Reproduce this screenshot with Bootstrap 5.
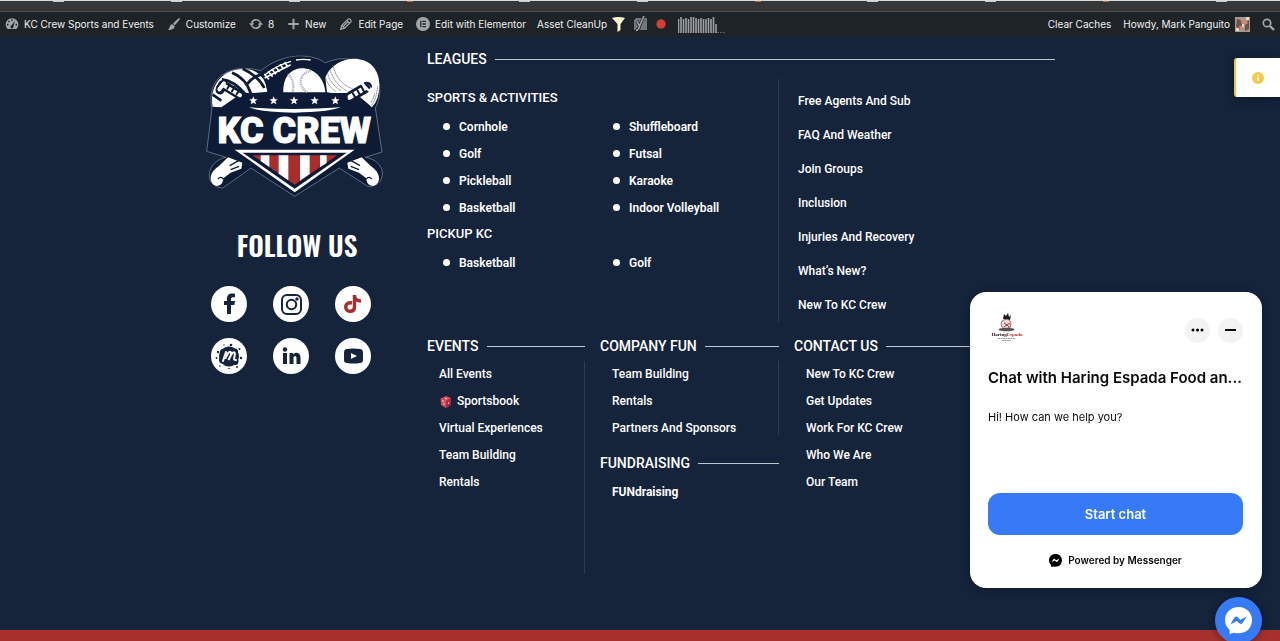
<!DOCTYPE html>
<html lang="en">
<head>
<meta charset="utf-8">
<meta name="viewport" content="width=device-width, initial-scale=1">
<title>KC Crew Sports and Events</title>
<link href="https://cdn.jsdelivr.net/npm/bootstrap@5.3.0/dist/css/bootstrap.min.css" rel="stylesheet">
<style>
  body { font-family: Roboto, sans-serif; background: #15233b; color: #fff; font-size: 12px; line-height: 20px; }
  a { color: inherit; text-decoration: none; }
  svg { display: block; flex: none; }
  .tab-strip { height: 12px; background: #353739; border-top: 1px solid #d5dcda; border-bottom: 1px solid #4b4e51; }
  .tab-strip i { width: 11px; height: 1px; background: #c9cccc; }
  .tab-strip i.warm { width: 6px; background: #b5643d; }
  .adminbar { height: 25px; background: #1e2327; color: #f0f0f1; font: 10px/24px Inter, sans-serif; padding: 0 5px 1px; }
  .adminbar svg { color: #a2a6aa; }
  .bar-items { gap: 13px; }
  .bar-items a { display: flex; align-items: center; gap: 5px; }
  .bar-right { gap: 12px; }
  .bar-extras { gap: 8px; margin-left: -2px; }
  .site { padding: 0 20px 0 0; }
  .wrap { max-width: 850px; margin: 0 auto; }
  .brand-col { width: 222px; padding-top: 16px; }
  .brand-inner { width: 178px; }
  .follow { font: 600 27px/40px Oswald, "Roboto Condensed", "Liberation Sans Narrow", sans-serif; margin: 26px 0 21px 6px; }
  .socials { display: grid; grid-template-columns: repeat(3, 36px); gap: 16px 26px; margin-left: 6px; }
  .socials a { width: 36px; height: 36px; border-radius: 50%; background: #fff; color: #15233b; }
  .head { display: flex; align-items: center; gap: 8px; font-size: 14px; font-weight: 500; line-height: 20px; margin: 0; white-space: nowrap; }
  .head::after { content: ""; flex: 1; height: 1px; background: #bcc8d0; }
  .leagues { margin-bottom: 10px; }
  .subhead { font-size: 13px; font-weight: 500; line-height: 24px; margin: 0; }
  .rule-end { border-right: 1px solid #2c3a52; }
  .sports-col { width: 352px; padding-top: 7px; }
  .sports { list-style: none; margin: 0; padding: 0 0 0 16px; display: grid; grid-template-columns: 170px 1fr; line-height: 27px; font-weight: 600; }
  .sports li { display: flex; align-items: center; gap: 9px; }
  .sports li::before { content: ""; width: 7px; height: 7px; margin-bottom: 3px; border-radius: 50%; background: #fff; }
  .help { line-height: 34px; font-weight: 500; font-size: 12px; padding: 5px 0 0 19px; }
  .events-grid { display: grid; grid-template-columns: 158px 179px 1fr; column-gap: 15px; margin-top: 14px; }
  .menu { line-height: 27px; font-weight: 500; font-size: 12px; padding: 0 0 0 12px; margin: 9px 0 0; }
  .events-menu { height: 213px; }
  .company-menu { height: 74px; }
  .menu ul { margin-top: -4px; }
  .fundraising { margin-top: 18px; }
  .fund-menu { margin-top: 10px; }
  .info-tab { right: 0; top: 58px; width: 46px; height: 39px; background: #fff; border: 0; border-left: 2px solid #efc443; border-radius: 3px 0 0 3px; box-shadow: 0 2px 12px #0005; }
  .chat { right: 18px; bottom: 53px; width: 292px; height: 296px; background: #fff; color: #080809; border-radius: 16px; padding: 20px 19px 20px 18px; font-family: Inter, sans-serif; box-shadow: 0 2px 10px #0004; }
  .chat-round { width: 25px; height: 25px; border: 0; border-radius: 50%; background: #f3f3f3; }
  .chat h2 { font-size: 15px; line-height: 20px; font-weight: 600; margin: 20px 0 0; white-space: nowrap; }
  .chat p { font-size: 11px; line-height: 20px; margin: 19px 0 0; }
  .start { background: #367bf5; color: #fff; border: 0; border-radius: 12px; height: 42px; font-size: 13px; font-weight: 600; }
  .powered { font-size: 10px; font-weight: 600; line-height: 16px; margin-top: 17px; gap: 6px; }
  .fab { right: 18px; bottom: -3px; width: 47px; height: 47px; border: 0; border-radius: 50%; background: #367bf5; box-shadow: 0 1px 8px #0006; }
  .red-band { height: 11px; background: #a7302d; }
</style>
</head>
<body class="d-flex flex-column min-vh-100">
<div class="tab-strip d-flex justify-content-around align-items-start"><i></i><i></i><i></i><i class="warm"></i><i></i><i></i><i class="warm"></i><i></i><i></i><i class="warm"></i><i></i></div>
<nav class="adminbar d-flex justify-content-between align-items-center text-nowrap" aria-label="Toolbar">
  <div class="bar-items d-flex align-items-center">
    <a href="#"><svg width="14" height="14" viewBox="0 0 20 20" fill="currentColor"><path d="M3.800 17h12.400c1.500-1.600 2.800-4 2.800-6.300A9 9 0 0 0 1 10.700C1 13 2.300 15.400 3.800 17z"/><g fill="#1e2327"><circle cx="10" cy="4.500" r="1.200"/><circle cx="5.500" cy="6.500" r="1.200"/><circle cx="3.800" cy="11" r="1.200"/><circle cx="16.200" cy="11" r="1.200"/><path d="M14.500 5.500l-2.500 7.500a2.200 2.200 0 1 1-3-1z"/></g></svg>KC Crew Sports and Events</a>
    <a href="#"><svg width="14" height="14" viewBox="0 0 20 20" fill="currentColor"><path d="M18.500 1.500c-1-1-7 4.500-9.800 8l2.500 2.300c3.200-3.300 8.300-9.300 7.300-10.300zM7.800 10.500c-2 0-3.300 1.200-3.700 3C3.700 15.300 3 16.800 1 18c3 1 7.500.5 9.300-2.500.8-1.300.8-2.300.2-3z"/></svg>Customize</a>
    <a href="#"><svg width="14" height="14" viewBox="0 0 20 20" fill="none" stroke="currentColor" stroke-width="2.400"><path d="M4 9.500A6.200 6.200 0 0 1 15.500 7M16 10.500A6.200 6.200 0 0 1 4.500 13"/><path fill="currentColor" stroke="none" d="M0 9h7.500L3.800 13.500zM20 11h-7.500l3.700-4.500z"/></svg>8</a>
    <a href="#"><svg width="13" height="14" viewBox="0 0 20 20" fill="currentColor"><path d="M8.500 2h3v6.500H18v3h-6.500V18h-3v-6.500H2v-3h6.500z"/></svg>New</a>
    <a href="#"><svg width="14" height="14" viewBox="0 0 20 20" fill="none" stroke="currentColor" stroke-width="1.800"><path d="M2.500 17.500L4 12 13 3c1.500-1.500 5.500 2 4 4l-9 9zM11 5l4 4M4 12l4 4M6 13.500l7-7"/></svg>Edit Page</a>
    <a href="#"><svg width="14" height="14" viewBox="0 0 20 20"><circle cx="10" cy="10" r="10" fill="currentColor"/><path fill="#1e2327" d="M6 5.500h1.800v9H6zM9.300 5.500H14v1.800H9.300zM9.300 9.100H14v1.800H9.300zM9.300 12.700H14v1.800H9.300z"/></svg>Edit with Elementor</a>
    <div class="bar-extras d-flex align-items-center">
      <a href="#">Asset CleanUp<svg width="13" height="15" viewBox="0 0 13 15"><path fill="#fff8cf" d="M0 1q6.500-2 13 0L8.500 7v6l-3 2V7z"/></svg></a>
      <a href="#" aria-label="SEO"><svg width="15" height="16" viewBox="0 0 15 16"><path fill="#72777c" d="M3 2h11v12H1V4z"/><path d="M4 5l2.500 5L11 0M6.500 10Q6 14 3 14.500" fill="none" stroke="#1e2327" stroke-width="3"/><path d="M4 5l2.500 5L11 0M6.500 10Q6 14 3 14.500" fill="none" stroke="#a2a6aa" stroke-width="1.600"/></svg></a>
      <a href="#" aria-label="Status"><svg width="10" height="10"><circle cx="5" cy="5" r="4.700" fill="#d63c32"/></svg></a>
      <a href="#" aria-label="Statistics" class="ms-1"><svg width="48" height="17" viewBox="0 0 48 17"><path d="M.5 3v14M3 1v16M5.500 3v14M8 2v15M10.500 3v14M13 1v16M15.500 1v16M18 2v15M20.500 3v14M23 2v15M25.500 3v14M28 3v14M30.500 2v15M33 3v14M35.500 1v16M38 8v9" stroke="#9da1a4" stroke-width="1.600"/><path d="M39 16.500h9" stroke="#555b60" stroke-dasharray="2 1"/></svg></a>
    </div>
  </div>
  <div class="bar-items bar-right d-flex align-items-center">
    <a href="#">Clear Caches</a>
    <a href="#">Howdy, Mark Panguito<svg width="15" height="15" viewBox="0 0 15 15"><path fill="#a59a91" d="M0 0h15v15H0z"/><path fill="#6e5148" d="M2 2l4 1 1 5-3 5-3-4zM10 6l4-3v9l-4 2z"/><path fill="#c98872" d="M5 2h5l3 4-3 2-3-1zM4 9h4l2 4H5z"/><path fill="#ddd8d2" d="M1 11h3v3H1zM11 0h3v3h-3zM7 7h2v3H7z"/></svg></a>
    <a href="#" aria-label="Search"><svg width="13" height="13" viewBox="0 0 13 13" fill="none" stroke="currentColor"><circle cx="5" cy="5" r="3.700" stroke-width="1.700"/><path d="M8 8l4 4" stroke-width="2.400"/></svg></a>
  </div>
</nav>

<main class="site flex-grow-1">
  <div class="wrap d-flex">
    <div class="brand-col flex-shrink-0">
      <div class="brand-inner">
        <a href="#" aria-label="KC Crew home"><svg width="178" height="146" viewBox="27 25 534 438">
          <path d="M48 190C30 110 90 50 195 78 250 30 340 20 388 55 480 10 590 90 538 190L558 322 508 338C580 350 570 430 515 425L430 370 296 455 165 370 80 430C20 425 30 350 90 338L32 320z" fill="#0d1b36" stroke="#8791a2" stroke-width="2"/>
          <path d="M50 186C38 120 85 60 165 75q42 14 50 66L130 150 76 188z" fill="#fff"/>
          <g fill="none" stroke="#0d1b36" stroke-width="8"><path d="M108 84Q150 100 165 148M140 72Q185 92 205 130M78 104Q115 108 150 150M150 122Q170 95 196 90M50 150l26 18M62 124l20 14"/></g>
          <g stroke-linecap="round" fill="none"><path d="M80 120l50 30M80 120l-8 16" stroke="#0d1b36" stroke-width="27"/><path d="M84 116l-14 18M82 122l50 30" stroke="#fff" stroke-width="12"/><path d="M94 132l8-13M108 140l8-13M122 149l8-13" stroke="#0d1b36" stroke-width="6"/></g>
          <path d="M202 84Q285 5 387 55L380 145H215z" fill="#0d1b36"/>
          <path d="M205 92Q240 62 285 50M300 46q22-4 44 0" stroke="#fff" stroke-width="4" fill="none"/>
          <path d="M205 88l14 16M216 80l14 16M227 73l13 16M239 66l12 15M252 59l11 15M266 53l10 15M206 100l78-40" stroke="#fff" stroke-width="5"/>
          <path d="M262 143C257 45 380 48 388 143z" fill="#fff"/><path d="M276 88q23 25 13 55M344 78c-38 10-38 48-10 65" stroke="#999fab" stroke-width="7" stroke-dasharray="3 3" fill="none"/>
          <path d="M388 98C420 20 550 20 550 120q0 45-22 68l-35-30-100-15z" fill="#fff"/>
          <path d="M410 62q15 55 60 70M402 73q12 45 50 65M395 86q8 33 40 52M389 99q6 25 30 41M545 125q-4 38-18 56M536 145q-4 18-12 30" stroke="#596377" stroke-width="3" stroke-dasharray="3 2" fill="none"/>
          <g stroke-linecap="round"><path d="M465 155l48-28" stroke="#0d1b36" stroke-width="31"/><path d="M460 158l45-27M500 115l22 20" stroke="#fff" stroke-width="15"/><path d="M507 115l13 14" stroke="#0d1b36" stroke-width="7"/><path d="M470 145l8 14M484 137l8 14M497 128l8 14" stroke="#0d1b36" stroke-width="6"/></g>
          <path d="M138 145H455V190H138z" fill="#0d1b36"/>
          <g fill="#fff"><path id="star" d="M172 155l3.500 8.500 9 .5-7 6 2.500 9-8-5-8 5 2.500-9-7-6 9-.5z"/><use href="#star" x="61"/><use href="#star" x="122"/><use href="#star" x="184"/><use href="#star" x="246"/><path d="M158 188Q296 198 434 188 400 202 296 204 195 202 158 188z"/></g>
          <text x="295" y="294" text-anchor="middle" font-family="Roboto, sans-serif" font-weight="900" font-size="108" fill="#fff" stroke="#fff" stroke-width="3">KC CREW</text>
          <path d="M116 315H476L296 443z" fill="#fff"/><path d="M140 324H452L296 432z" fill="#0d1b36"/><path d="M170 332H424L296 420z" fill="#a92d2c"/>
          <path d="M194 332h26v35l-26-18zM248 332h29v75l-29-20zM312 332h29v56l-29 20zM372 332h20v23l-20 13z" fill="#fff"/>
          <path id="bone" d="M96 338l43 16-3 18-32 12-22 17c-1 32-38 28-38 0 0-14 10-27 24-36z" fill="#fff"/>
          <path d="M101 363l27-15M104 375l25-10M66 403q8-10 16 0" stroke="#0d1b36" stroke-width="4" fill="none"/>
          <g transform="matrix(-1 0 0 1 593 0)"><use href="#bone"/><path d="M101 363l27-15M104 375l25-10M66 403q8-10 16 0" stroke="#0d1b36" stroke-width="4" fill="none"/></g>
        </svg></a>
        <h2 class="follow text-center text-nowrap">FOLLOW US</h2>
        <div class="socials">
          <a href="#" aria-label="Facebook"><svg width="36" height="36" viewBox="0 0 36 36" fill="currentColor"><path d="M16 28V19h-3v-4h3v-2c0-3.800 2-5.500 5-5.500l3 .2v3.600h-2c-1.500 0-2 .7-2 1.800V15h4l-.6 4H20v9z"/></svg></a>
          <a href="#" aria-label="Instagram"><svg width="36" height="36" viewBox="0 0 36 36" fill="none" stroke="currentColor" stroke-width="2"><rect x="9" y="9" width="19" height="19" rx="5"/><circle cx="18.500" cy="18.500" r="4.700"/><circle cx="24" cy="13" r=".7"/></svg></a>
          <a href="#" aria-label="TikTok"><svg width="36" height="36" viewBox="0 0 36 36" fill="none" stroke="#a92d2c" stroke-width="3.400"><path d="M17 17c-5-1-7 2-6 5.500 1.500 4 8.500 4 8.500-1.500V9M19.500 9c0 4 3 6 6.500 6"/></svg></a>
          <a href="#" aria-label="Meetup"><svg width="36" height="36" viewBox="0 0 36 36" fill="currentColor"><circle cx="18" cy="18.500" r="10"/><circle cx="12" cy="14" r="3"/><circle cx="24" cy="13.500" r="3"/><circle cx="11.500" cy="22" r="3.500"/><circle cx="24" cy="23.500" r="3.500"/><circle cx="7" cy="14" r="1.200"/><circle cx="20" cy="7" r="1.300"/><circle cx="28.500" cy="11" r="1"/><circle cx="30" cy="20" r="1.200"/><circle cx="5.500" cy="20" r=".9"/><circle cx="9" cy="28" r=".8"/><circle cx="18" cy="30.500" r=".8"/><circle cx="26" cy="29" r="1"/><circle cx="13" cy="7" r=".7"/><path d="M12 23l3-9M14.500 20q3-7 5-6t-2 8q4-9 6-7.500c2 2-3 8 1.500 7.500" fill="none" stroke="#fff" stroke-width="2" stroke-linecap="round"/></svg></a>
          <a href="#" aria-label="LinkedIn"><svg width="36" height="36" viewBox="0 0 36 36" fill="currentColor"><circle cx="12" cy="11.500" r="2.200"/><path d="M10 15h4v11h-4zM16.500 15h3.700v1.600c2-3 7.300-2.300 7.300 2.900V26h-4v-6c0-2.600-3-2.300-3 0v6h-4z"/></svg></a>
          <a href="#" aria-label="YouTube"><svg width="36" height="36" viewBox="0 0 36 36"><path fill="currentColor" d="M12 11q6-1 13 0 3 0 3 4v7q0 3-3 3-7 1-13 0-3 0-3-3v-7q0-4 3-4z"/><path fill="#fff" d="M16 15l6 3-6 3z"/></svg></a>
        </div>
      </div>
    </div>

    <div class="flex-grow-1 pt-2">
      <div class="leagues pt-1"><h2 class="head">LEAGUES</h2></div>
      <div class="d-flex">
        <div class="sports-col rule-end">
          <h3 class="subhead">SPORTS &amp; ACTIVITIES</h3>
          <ul class="sports pt-1">
            <li><a href="#">Cornhole</a></li><li><a href="#">Shuffleboard</a></li>
            <li><a href="#">Golf</a></li><li><a href="#">Futsal</a></li>
            <li><a href="#">Pickleball</a></li><li><a href="#">Karaoke</a></li>
            <li><a href="#">Basketball</a></li><li><a href="#">Indoor Volleyball</a></li>
          </ul>
          <h3 class="subhead">PICKUP KC</h3>
          <ul class="sports pt-1"><li><a href="#">Basketball</a></li><li><a href="#">Golf</a></li></ul>
        </div>
        <ul class="help list-unstyled mb-0">
          <li><a href="#">Free Agents And Sub</a></li><li><a href="#">FAQ And Weather</a></li><li><a href="#">Join Groups</a></li><li><a href="#">Inclusion</a></li><li><a href="#">Injuries And Recovery</a></li><li><a href="#">What’s New?</a></li><li><a href="#">New To KC Crew</a></li>
        </ul>
      </div>
      <div class="events-grid">
        <div>
          <h2 class="head">EVENTS</h2>
          <div class="menu events-menu rule-end"><ul class="list-unstyled mb-0">
            <li><a href="#">All Events</a></li>
            <li><a href="#" class="d-flex align-items-center gap-1"><svg width="14" height="14" viewBox="0 0 14 14"><path fill="#d94a57" d="M7 1l5 2-.5 7L7 13 2 10 1.500 3.500z"/><path fill="#a9283b" d="M7 6l5-3-.5 7L7 13z"/><g fill="#fff"><circle cx="4" cy="6" r=".7"/><circle cx="5" cy="9" r=".7"/><circle cx="7" cy="3.500" r=".8"/><circle cx="9.500" cy="8" r=".7"/></g></svg>Sportsbook</a></li>
            <li><a href="#">Virtual Experiences</a></li><li><a href="#">Team Building</a></li><li><a href="#">Rentals</a></li>
          </ul></div>
        </div>
        <div>
          <h2 class="head">COMPANY FUN</h2>
          <div class="menu company-menu rule-end"><ul class="list-unstyled mb-0"><li><a href="#">Team Building</a></li><li><a href="#">Rentals</a></li><li><a href="#">Partners And Sponsors</a></li></ul></div>
          <h2 class="head fundraising">FUNDRAISING</h2>
          <div class="menu fund-menu fw-bold"><ul class="list-unstyled mb-0"><li><a href="#">FUNdraising</a></li></ul></div>
        </div>
        <div>
          <h2 class="head">CONTACT US</h2>
          <div class="menu"><ul class="list-unstyled mb-0"><li><a href="#">New To KC Crew</a></li><li><a href="#">Get Updates</a></li><li><a href="#">Work For KC Crew</a></li><li><a href="#">Who We Are</a></li><li><a href="#">Our Team</a></li></ul></div>
        </div>
      </div>
    </div>
  </div>
</main>
<div class="red-band"></div>

<button class="info-tab position-fixed d-flex align-items-center justify-content-center p-0" aria-label="Information"><svg width="12" height="12" viewBox="0 0 12 12"><circle cx="6" cy="6" r="6" fill="#f3ca4d"/><path d="M5.300 2.500h1.500V4H5.300zM5 5h1.800v4H5.300V6H5z" fill="#fff"/></svg></button>

<section class="chat position-fixed d-flex flex-column" aria-label="Chat">
  <div class="d-flex justify-content-between align-items-center">
    <svg width="38" height="36" viewBox="0 0 38 36"><path d="M15 7l1-5 2 2 2-3 1 4 2-2-1 5z" fill="#191919"/><path d="M14 9q6-4 9 1l-1 6q-4 3-8-1-2-3 0-6z" fill="#f3d9d6" stroke="#9e5753" stroke-width=".8"/><path d="M16 11l3 2 3-2M16 15q4-4 5 1" fill="none" stroke="#a73a36"/><ellipse cx="18.500" cy="17.500" rx="8" ry="1.700" fill="#555"/><text x="19" y="24" text-anchor="middle" font-family="Liberation Serif, serif" font-size="5" font-weight="700" fill="#181818">Haring<tspan fill="#b33535">Espada</tspan></text><path d="M10 26.500h17M14 28.500h9" stroke="#777" stroke-width=".7" stroke-dasharray="2 .5"/></svg>
    <div class="d-flex gap-2"><button class="chat-round p-0 d-flex align-items-center justify-content-center" aria-label="More options"><svg width="13" height="4" viewBox="0 0 13 4"><circle cx="2" cy="2" r="1.500"/><circle cx="6.500" cy="2" r="1.500"/><circle cx="11" cy="2" r="1.500"/></svg></button><button class="chat-round p-0 d-flex align-items-center justify-content-center" aria-label="Minimise"><svg width="11" height="2"><path d="M0 0h11v2H0z"/></svg></button></div>
  </div>
  <h2>Chat with Haring Espada Food an...</h2>
  <p>Hi! How can we help you?</p>
  <button class="start w-100 mt-auto">Start chat</button>
  <div class="powered d-flex justify-content-center align-items-center"><svg width="13" height="13" viewBox="0 0 24 24"><path d="M12 0C5 0 0 5 0 11.600 0 15.200 1.500 18.200 4 20.300V24l4-1.100C17 25 24 20 24 11.600 24 5 19 0 12 0z"/><path d="M4.500 15l4.500-6.500 4.500 3.200 6-3.200L15 15l-4.500-3.200z" fill="#fff"/></svg>Powered by Messenger</div>
</section>
<button class="fab position-fixed d-flex align-items-center justify-content-center p-0" aria-label="Open Messenger"><svg width="27" height="27" viewBox="0 0 24 24"><path fill="#fff" d="M12 0C5 0 0 5 0 11.600 0 15.200 1.500 18.200 4 20.300V24l4-1.100C17 25 24 20 24 11.600 24 5 19 0 12 0z"/><path d="M5 15.500Q8 9 9.500 8.500T13.500 11.500L19 8.500Q16 14.500 14.500 15T10.500 12.500z" fill="#367bf5"/></svg></button>
<script src="https://cdn.jsdelivr.net/npm/bootstrap@5.3.0/dist/js/bootstrap.bundle.min.js"></script>
</body>
</html>
